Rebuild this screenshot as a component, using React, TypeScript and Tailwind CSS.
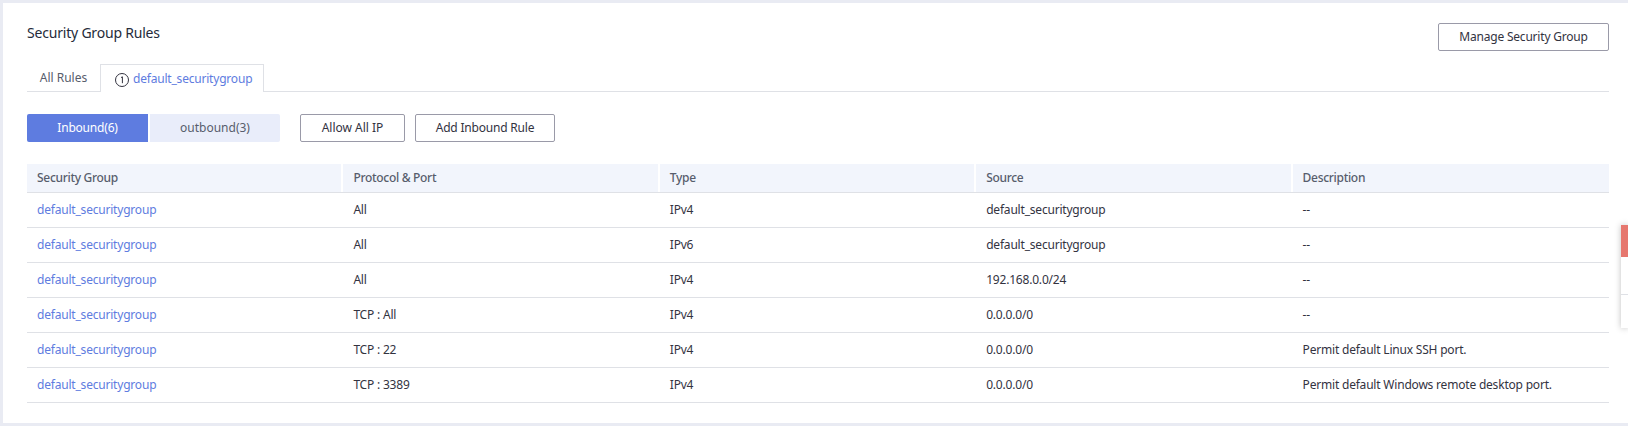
const font = "font-['Noto_Sans','Open_Sans',sans-serif]";

const rows = [
  ["All", "IPv4", "default_securitygroup", "--"],
  ["All", "IPv6", "default_securitygroup", "--"],
  ["All", "IPv4", "192.168.0.0/24", "--"],
  ["TCP : All", "IPv4", "0.0.0.0/0", "--"],
  ["TCP : 22", "IPv4", "0.0.0.0/0", "Permit default Linux SSH port."],
  ["TCP : 3389", "IPv4", "0.0.0.0/0", "Permit default Windows remote desktop port."],
];

const heads = ["Security Group", "Protocol & Port", "Type", "Source", "Description"];

function OutlineButton({ label, className }: { label: string; className: string }) {
  return (
    <button className={`h-[28px] rounded-[2px] border border-[#9a9aa8] bg-white text-[12px] text-[#33333f] ${className}`}>
      {label}
    </button>
  );
}

export default function App() {
  return (
    <div className={`relative h-[426px] w-[1628px] overflow-hidden bg-[#e9ebf3] pl-[3px] pt-[3px] pb-[3px] text-[12px] tracking-[-0.2px] text-[#33333f] ${font}`}>
      <div className="flex h-full flex-col bg-white pl-[24px] pr-[19px]">
        <div className="flex h-[48px] items-start justify-between">
          <h2 className="pt-[21px] text-[14px] leading-[18px] text-[#252b3a]">Security Group Rules</h2>
          <OutlineButton label="Manage Security Group" className="mt-[20px] w-[171px] tracking-[-0.2px]" />
        </div>

        <div className="mt-[13px] flex h-[28px] border-b border-[#dfe1e6]">
          <div className="flex h-[27px] w-[73px] items-center justify-center tracking-normal text-[#575d6c]">All Rules</div>
          <div className="flex h-[28px] w-[164px] items-center gap-[3px] border border-b-0 border-[#dfe1e6] bg-white pl-[13px] text-[#5e7ce0]">
            <svg width="16" height="16" viewBox="0 0 16 16" className="mt-[2px] shrink-0">
              <circle cx="8" cy="8" r="6.5" fill="none" stroke="#33333f" strokeWidth="1" />
              <path d="M7 5.6 8.4 4.8V11.2" fill="none" stroke="#33333f" strokeWidth="1" />
            </svg>
            <span>default_securitygroup</span>
          </div>
        </div>

        <div className="mt-[22px] flex h-[28px]">
          <div className="flex h-full w-[121px] items-center justify-center rounded-l-[2px] bg-[#5e7ce0] text-white">Inbound(6)</div>
          <div className="ml-[2px] flex h-full w-[130px] items-center justify-center rounded-r-[2px] bg-[#e9edfa] tracking-normal text-[#575d6c]">outbound(3)</div>
          <OutlineButton label="Allow All IP" className="ml-[20px] w-[105px] tracking-normal" />
          <OutlineButton label="Add Inbound Rule" className="ml-[10px] w-[140px] tracking-[-0.2px]" />
        </div>

        <div className="mt-[22px] flex flex-col">
          <div className="grid h-[29px] grid-cols-5 border-b border-[#dfe1e6] bg-[#f2f5fc]">
            {heads.map((h, i) => (
              <div key={h} className={`flex items-center pl-[10px] font-medium tracking-[-0.3px] text-[#575d6c] ${i < 4 ? "border-r-2 border-white" : ""}`}>
                {h}
              </div>
            ))}
          </div>
          {rows.map((r, i) => (
            <div key={i} className="grid h-[35px] grid-cols-5 items-center border-b border-[#dfe1e6]">
              <div className="pl-[10px] text-[#5e7ce0]">default_securitygroup</div>
              {r.map((c, j) => (
                <div key={j} className="pl-[10px]">{c}</div>
              ))}
            </div>
          ))}
        </div>
      </div>

      <div className="absolute left-[1621px] top-[225px] flex h-[103px] w-[7px] flex-col bg-white shadow-[0_0_6px_rgba(0,0,0,0.25)]">
        <div className="h-[32px] bg-[#e6776e]" />
        <div className="mt-[37px] h-px bg-[#dfe1e6]" />
      </div>
    </div>
  );
}
